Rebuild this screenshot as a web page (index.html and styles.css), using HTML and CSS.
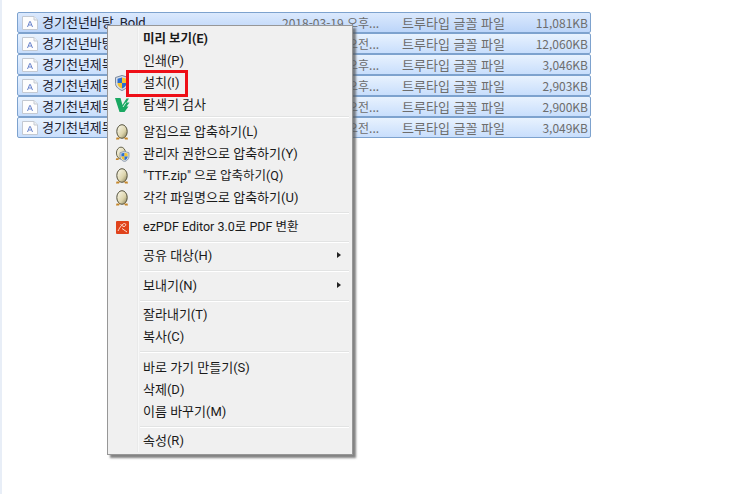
FILE: index.html
```html
<!DOCTYPE html>
<html lang="ko">
<head>
<meta charset="utf-8">
<title>TTF 컨텍스트 메뉴</title>
<link rel="stylesheet" href="styles.css">
</head>
<body>
<svg class="defs" width="0" height="0" aria-hidden="true">
  <defs>
    <linearGradient id="eggfill" x1="0" y1="0" x2="1" y2="1">
      <stop offset="0" stop-color="#fdfbf0"/>
      <stop offset="0.6" stop-color="#dcd4ac"/>
      <stop offset="1" stop-color="#7d7650"/>
    </linearGradient>
    <symbol id="ttf" viewBox="0 0 16 14">
      <path d="M.5 .5H12L15.500 4V13.500H.5Z" fill="#fdfdfd" stroke="#c3c9d2"/>
      <path d="M12 .5V4H15.500" fill="#eef0f3" stroke="#c3c9d2"/>
      <path d="M5.500 11L7.700 5.500H8.300L10.500 11M6.500 9H9.500" fill="none" stroke="#6a84cc"/>
    </symbol>
    <symbol id="egg" viewBox="0 0 16 16">
      <ellipse cx="8" cy="7.500" rx="5.200" ry="6.800" fill="url(#eggfill)" stroke="#55523c"/>
      <path d="M2.500 13.500H6L5 15.500H2ZM10 13.500H13.500L14 15.500H11Z" fill="#c4862a"/>
    </symbol>
    <symbol id="shield" viewBox="0 0 16 16">
      <path d="M8 .5L14.500 2.500V8.500C14.500 12 11 14.300 8 15.500C5 14.300 1.500 12 1.500 8.500V2.500Z" fill="#d5dce6" stroke="#77879c"/>
      <path d="M8 2.500L3.500 3.800V8H8Z" fill="#2c6fd0"/>
      <path d="M8 2.500L12.500 3.800V8H8Z" fill="#f6c62f"/>
      <path d="M3.500 8H8V13.500C5.800 12.500 3.500 11 3.500 8Z" fill="#f4c22b"/>
      <path d="M12.500 8H8V13.500C10.200 12.500 12.500 11 12.500 8Z" fill="#2c6fd0"/>
    </symbol>
  </defs>
</svg>

<main class="pane">
  <ul class="files">
    <li class="file focus"><svg class="file-icon"><use href="#ttf"/></svg><span class="name">경기천년바탕_Bold</span><span class="date">2018-03-19 오후...</span><span class="type">트루타입 글꼴 파일</span><span class="size">11,081KB</span></li>
    <li class="file"><svg class="file-icon"><use href="#ttf"/></svg><span class="name">경기천년바탕</span><span class="date">2018-03-19 오전...</span><span class="type">트루타입 글꼴 파일</span><span class="size">12,060KB</span></li>
    <li class="file"><svg class="file-icon"><use href="#ttf"/></svg><span class="name">경기천년제목</span><span class="date">2018-03-19 오후...</span><span class="type">트루타입 글꼴 파일</span><span class="size">3,046KB</span></li>
    <li class="file"><svg class="file-icon"><use href="#ttf"/></svg><span class="name">경기천년제목</span><span class="date">2018-03-19 오후...</span><span class="type">트루타입 글꼴 파일</span><span class="size">2,903KB</span></li>
    <li class="file"><svg class="file-icon"><use href="#ttf"/></svg><span class="name">경기천년제목</span><span class="date">2018-03-19 오전...</span><span class="type">트루타입 글꼴 파일</span><span class="size">2,900KB</span></li>
    <li class="file"><svg class="file-icon"><use href="#ttf"/></svg><span class="name">경기천년제목</span><span class="date">2018-03-19 오전...</span><span class="type">트루타입 글꼴 파일</span><span class="size">3,049KB</span></li>
  </ul>
</main>

<nav class="menu">
  <div class="item strong"><span>미리 보기(E)</span></div>
  <div class="item"><span>인쇄(P)</span></div>
  <div class="item"><svg class="ico"><use href="#shield"/></svg><span>설치(I)</span></div>
  <div class="item"><svg class="ico" viewBox="0 0 16 16"><path d="M1 1H6.500L8.500 8L12.500 1.500H15L12.500 5.500H15.500L12.500 9.500H14.500L10.500 15H5.500Z" fill="#1aa862"/><path d="M9 10L12 5.500" stroke="#d8f3e2"/></svg><span>탐색기 검사</span></div>
  <div class="sep sep-tight"></div>
  <div class="item"><svg class="ico"><use href="#egg"/></svg><span>알집으로 압축하기(L)</span></div>
  <div class="item"><svg class="ico" viewBox="0 0 16 16"><use href="#egg" width="14" height="15"/><use href="#shield" x="5" y="5" width="11" height="11"/></svg><span>관리자 권한으로 압축하기(Y)</span></div>
  <div class="item latin"><svg class="ico"><use href="#egg"/></svg><span>"TTF.zip" 으로 압축하기(Q)</span></div>
  <div class="item"><svg class="ico"><use href="#egg"/></svg><span>각각 파일명으로 압축하기(U)</span></div>
  <div class="sep"></div>
  <div class="item latin"><svg class="ico" viewBox="0 0 16 16"><rect x="2" y="2" width="13" height="13" rx="1" fill="#e0431c"/><path d="M4 12C6 8 8.500 4.500 10.500 4.500C12.500 4.500 12 7.500 10 7.500C8.500 7.500 7.500 6 6.500 5M8 9.500L13 13" fill="none" stroke="#ffdccc"/></svg><span>ezPDF Editor 3.0로 PDF 변환</span></div>
  <div class="sep"></div>
  <div class="item more"><span>공유 대상(H)</span></div>
  <div class="sep sep-wide"></div>
  <div class="item more"><span>보내기(N)</span></div>
  <div class="sep"></div>
  <div class="item"><span>잘라내기(T)</span></div>
  <div class="item"><span>복사(C)</span></div>
  <div class="sep sep-wider"></div>
  <div class="item"><span>바로 가기 만들기(S)</span></div>
  <div class="item"><span>삭제(D)</span></div>
  <div class="item"><span>이름 바꾸기(M)</span></div>
  <div class="sep"></div>
  <div class="item"><span>속성(R)</span></div>
  <div class="highlight"></div>
</nav>
</body>
</html>
```
FILE: styles.css
```css
* { box-sizing: border-box; }
html, body { margin: 0; height: 100%; }
body {
  width: 746px;
  height: 494px;
  background: #fff;
  overflow: hidden;
  position: relative;
  font-family: "Noto Sans CJK KR", "Noto Sans", sans-serif;
  font-size: 12px;
  border-left: 2px solid #e8eef7;
}
.defs { position: absolute; }
.pane { padding: 12px 0 0 15px; }
.files { list-style: none; margin: 0; padding: 0; width: 574px; }
.file {
  display: flex;
  align-items: center;
  height: 21px;
  border: 1px solid #7da2ce;
  border-radius: 2px;
  background: linear-gradient(#e8f2fe, #c8defc);
  color: #6d6d6d;
  white-space: nowrap;
  line-height: 18px;
}
.focus { background: linear-gradient(#dbe9fd, #bcd5f9); }
.file-icon { width: 16px; height: 14px; margin-left: 4px; flex: none; }
.name {
  width: 240px;
  margin-left: 4px;
  color: #1c2230;
  flex: none;
  font-family: Roboto, "Noto Sans CJK KR", sans-serif;
  font-size: 13px;
}
.date { width: 120px; flex: none; }
.type { width: 120px; flex: none; font-size: 13px; }
.size { flex: 1; text-align: right; padding-right: 2px; }
.menu {
  position: absolute;
  left: 105px;
  top: 25px;
  width: 246px;
  height: 430px;
  padding: 1px 2px;
  background: #f0f0f0;
  border: 1px solid #979797;
  box-shadow: 3px 3px 2px rgba(90, 90, 90, .75);
  color: #1a1a1a;
  font-family: Roboto, "Noto Sans CJK KR", sans-serif;
  font-size: 13px;
}
.menu::before {
  content: "";
  position: absolute;
  left: 29px;
  top: 2px;
  bottom: 2px;
  width: 2px;
  background: linear-gradient(90deg, #e2e3e3, #fff);
}
.item {
  position: relative;
  display: flex;
  align-items: center;
  height: 22px;
  padding: 2px 0 0 33px;
  line-height: 18px;
  white-space: nowrap;
}
.strong { font-weight: 700; font-size: 12.5px; }
.latin { font-size: 12.5px; }
.ico {
  position: absolute;
  left: 4px;
  top: 4px;
  width: 16px;
  height: 16px;
}
.more::after {
  content: "";
  position: absolute;
  right: 9px;
  top: 8px;
  border-left: 4px solid #222;
  border-top: 3.5px solid transparent;
  border-bottom: 3.5px solid transparent;
}
.sep {
  position: relative;
  height: 2px;
  margin: 4px 1px 1px 30px;
  background: linear-gradient(#e2e3e3 50%, #fff 50%);
}
.sep-tight { margin-top: 1px; margin-bottom: 2px; }
.sep-wide { margin-bottom: 2px; }
.sep-wider { margin-bottom: 3px; }
.highlight {
  position: absolute;
  left: 18px;
  top: 44px;
  width: 62px;
  height: 27px;
  border: 3px solid #ee0f17;
  pointer-events: none;
}
```
